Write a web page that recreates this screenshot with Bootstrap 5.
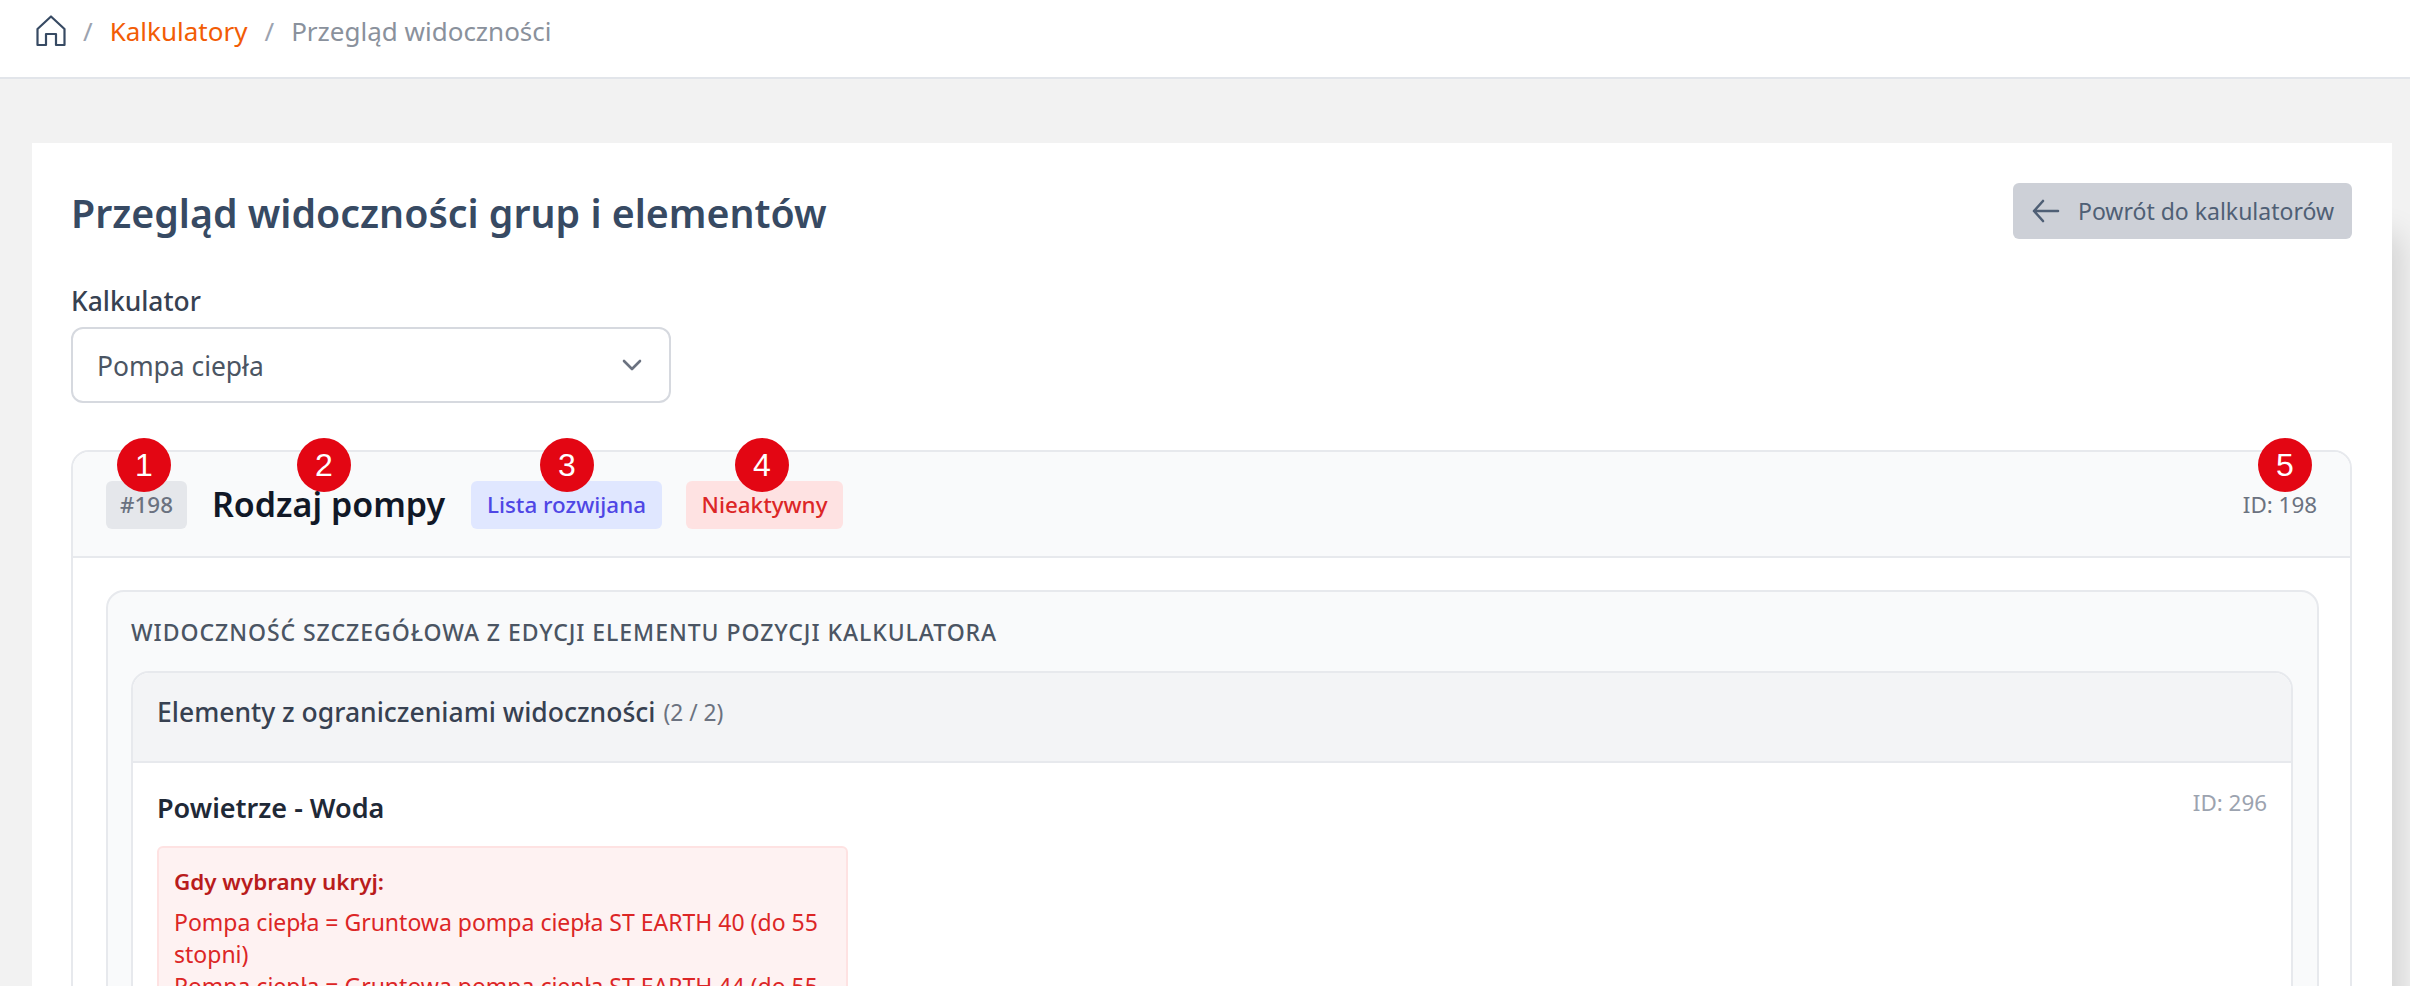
<!doctype html>
<html lang="pl">
<head>
<meta charset="utf-8">
<title>Przegląd widoczności</title>
<link href="https://cdn.jsdelivr.net/npm/bootstrap@5.3.0/dist/css/bootstrap.min.css" rel="stylesheet">
<style>
html,body{height:986px;overflow:hidden}
body{background:#f2f2f2;font-family:"Noto Sans","Open Sans",sans-serif;font-size:23px;color:#374151;line-height:1.5}
.topbar{height:79px;background:#fff;border-bottom:2px solid #e2e5ea;padding:0 34px 15px 35px}
.crumbs{font-size:26px;gap:17px;color:#9ca3af}
.crumbs svg{margin-right:-1px}
.crumbs a{color:#f25c05;text-decoration:none}
.crumbs .cur{color:#8a919c}
.sheet{margin:64px 18px 0 32px;background:#fff;padding:40px 40px 0 39px;box-shadow:20px 80px 30px -12px rgba(0,0,0,.14);height:900px}
.ttl{font-size:39.3px;font-weight:600;color:#374a63;margin:1px 0 0;line-height:59px}
.backbtn{width:339px;height:56px;background:#cdd0d7;border:0;border-radius:6px;color:#4f5f75;font-size:23px;gap:18px;padding:0 0 0 19px;white-space:nowrap}
.lab{font-size:26.4px;font-weight:500;color:#374151;line-height:40px;margin:38px 0 6px}
.pick{width:600px;height:76px;border:2px solid #d6d9df;border-radius:12px;padding:3px 27px 0 24px;font-size:26.4px;color:#4b5563}
.pick svg{margin-top:-3px}
.blk{margin-top:47px;border:2px solid #e7e9ed;border-radius:18px 18px 0 0;background:#fff;width:2281px}
.blkhead{height:106px;background:#f9fafb;border-bottom:2px solid #e7e9ed;border-radius:16px 16px 0 0;padding:29px 33px 0}
.tag{height:48px;border-radius:6px;font-size:22.4px;font-weight:500;padding:0 16px}
.t-id{background:#e5e7eb;color:#6b7280;width:81px;padding:0;justify-content:center}
.t-list{background:#e0e7ff;color:#4f46e5;width:191px;padding:0;justify-content:center}
.t-off{background:#fee2e2;color:#dc2626;width:157px;padding:0;justify-content:center}
.nm{font-size:34px;font-weight:600;color:#111827;width:284px;padding-left:25px;line-height:47px;white-space:nowrap}
.idr{font-size:22.4px;color:#6b7280;line-height:47px}
.spot{position:absolute;width:54px;height:54px;top:-14px;border-radius:50%;background:#e30613;color:#fff;font-family:"Liberation Sans",sans-serif;font-size:32px;z-index:2}
.blkbody{padding:32px 31px 0 33px}
.panel{border:2px solid #e7e9ed;border-radius:18px 18px 0 0;background:#f9fafb;padding:24px 24px 0 23px}
.ptitle{font-size:23px;font-weight:500;color:#4b5563;line-height:32px;margin-bottom:23px;text-transform:uppercase;letter-spacing:.95px}
.inner{border:2px solid #e7e9ed;border-radius:18px 18px 0 0;background:#fff}
.innerhead{height:90px;background:#f3f4f6;border-bottom:2px solid #e7e9ed;border-radius:16px 16px 0 0;padding:0 24px 8px;font-size:26.5px;font-weight:500;color:#374151}
.innerhead span{font-size:22.7px;font-weight:400;color:#6b7280}
.innerbody{padding:27px 24px 0}
.elname{font-size:27px;font-weight:600;color:#1f2937;line-height:36px}
.elid{font-size:22.4px;color:#9ca3af;margin-top:-4px}
.rule{width:691px;margin-top:20px;background:#fef2f2;border:2px solid #fee2e2;border-radius:6px;padding:18px 16px 18px 15px;color:#dc2626}
.rule b{display:block;font-weight:600;color:#b91c1c;font-size:22.4px;line-height:32px;margin-bottom:8px}
.rule div{line-height:32px}
</style>
</head>
<body>
<div class="topbar d-flex align-items-center">
  <nav class="crumbs d-flex align-items-center">
    <svg width="32" height="32" viewBox="0 0 32 32" fill="none" stroke="#374a63" stroke-width="2.2" stroke-linejoin="round"><path d="M2.5 14 16 1.5 29.5 14V30H21V19H11V30H2.5Z"/></svg>
    <span>/</span><a href="#">Kalkulatory</a><span>/</span><span class="cur">Przegląd widoczności</span>
  </nav>
</div>
<main class="sheet">
  <div class="d-flex justify-content-between align-items-start">
    <h1 class="ttl">Przegląd widoczności grup i elementów</h1>
    <button class="backbtn d-flex align-items-center" type="button">
      <svg width="28" height="24" viewBox="0 0 28 24" fill="none" stroke="#4f5f75" stroke-width="2.6" stroke-linecap="round" stroke-linejoin="round"><path d="M26 12H2M11 2 2 12l9 10"/></svg>
      <span>Powrót do kalkulatorów</span>
    </button>
  </div>
  <div class="lab">Kalkulator</div>
  <div class="pick d-flex align-items-center justify-content-between">
    <span>Pompa ciepła</span>
    <svg width="20" height="12" viewBox="0 0 20 12" fill="none" stroke="#6b7280" stroke-width="2.6" stroke-linecap="round" stroke-linejoin="round"><path d="M2 2l8 8 8-8"/></svg>
  </div>
  <section class="blk">
    <header class="blkhead position-relative d-flex align-items-start">
      <span class="spot d-flex align-items-center justify-content-center" style="left:44px">1</span>
      <span class="spot d-flex align-items-center justify-content-center" style="left:224px">2</span>
      <span class="spot d-flex align-items-center justify-content-center" style="left:467px">3</span>
      <span class="spot d-flex align-items-center justify-content-center" style="left:662px">4</span>
      <span class="spot d-flex align-items-center justify-content-center" style="left:2185px">5</span>
      <span class="tag t-id d-flex align-items-center">#198</span>
      <span class="nm">Rodzaj pompy</span>
      <span class="tag t-list d-flex align-items-center">Lista rozwijana</span>
      <span class="tag t-off d-flex align-items-center ms-4">Nieaktywny</span>
      <span class="idr ms-auto">ID: 198</span>
    </header>
    <div class="blkbody">
      <div class="panel">
        <div class="ptitle">Widoczność szczegółowa z edycji elementu pozycji kalkulatora</div>
        <div class="inner">
          <div class="innerhead d-flex align-items-center gap-2">Elementy z ograniczeniami widoczności <span>(2 / 2)</span></div>
          <div class="innerbody">
            <div class="d-flex justify-content-between">
              <div class="elname">Powietrze - Woda</div>
              <div class="elid">ID: 296</div>
            </div>
            <div class="rule">
              <b>Gdy wybrany ukryj:</b>
              <div>Pompa ciepła = Gruntowa pompa ciepła ST EARTH 40 (do 55 stopni)</div>
              <div>Pompa ciepła = Gruntowa pompa ciepła ST EARTH 44 (do 55 stopni)</div>
            </div>
          </div>
        </div>
      </div>
    </div>
  </section>
</main>
<script src="https://cdn.jsdelivr.net/npm/bootstrap@5.3.0/dist/js/bootstrap.bundle.min.js"></script>
</body>
</html>
